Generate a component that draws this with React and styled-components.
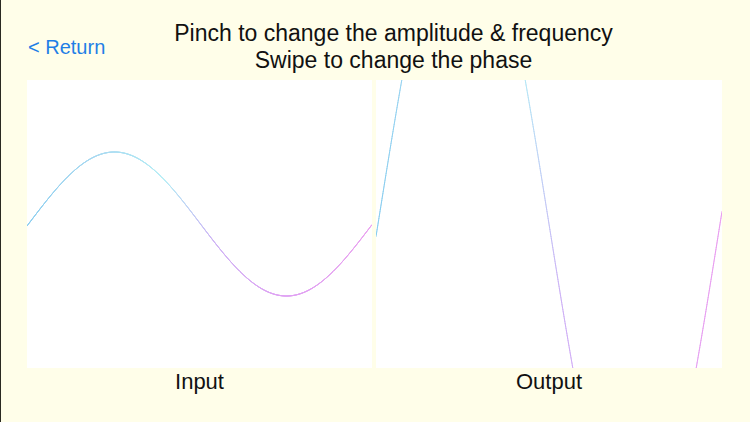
import React from "react";
import styled, { createGlobalStyle } from "styled-components";

const GlobalStyle = createGlobalStyle`
  html, body {
    margin: 0;
    padding: 0;
    background: #fffee9;
  }
  body {
    font-family: "Liberation Sans", Arial, sans-serif;
  }
`;

// colour along the curve, by fraction of arc length
const STOPS = [
  [0, [132, 204, 240]],
  [0.22, [168, 218, 242]],
  [0.38, [176, 238, 246]],
  [0.55, [204, 176, 246]],
  [0.75, [224, 160, 244]],
  [1, [234, 156, 240]],
];

function colorAt(t) {
  for (let i = 1; i < STOPS.length; i++) {
    const [t1, c1] = STOPS[i];
    const [t0, c0] = STOPS[i - 1];
    if (t <= t1) {
      const k = (t - t0) / (t1 - t0);
      const c = c0.map((v, j) => Math.round(v + (c1[j] - v) * k));
      return `rgb(${c[0]},${c[1]},${c[2]})`;
    }
  }
  const c = STOPS[STOPS.length - 1][1];
  return `rgb(${c[0]},${c[1]},${c[2]})`;
}

function buildSegments(width, height, amp, period, shift) {
  const n = 1200;
  const pts = [];
  for (let i = 0; i <= n; i++) {
    const x = (width * i) / n;
    const y = height / 2 - amp * Math.sin((2 * Math.PI * (x - shift)) / period);
    pts.push([x, y]);
  }
  const lens = [0];
  for (let i = 1; i < pts.length; i++) {
    const dx = pts[i][0] - pts[i - 1][0];
    const dy = pts[i][1] - pts[i - 1][1];
    lens.push(lens[i - 1] + Math.hypot(dx, dy));
  }
  const total = lens[lens.length - 1];
  const segs = [];
  for (let i = 1; i < pts.length; i++) {
    segs.push({
      x1: pts[i - 1][0],
      y1: pts[i - 1][1],
      x2: pts[i][0],
      y2: pts[i][1],
      color: colorAt(lens[i] / total),
    });
  }
  return segs;
}

function Wave({ width, height, amp, period, shift }) {
  const segs = buildSegments(width, height, amp, period, shift);
  return (
    <svg width={width} height={height} viewBox={`0 0 ${width} ${height}`}>
      {segs.map((s, i) => (
        <line
          key={i}
          x1={s.x1}
          y1={s.y1}
          x2={s.x2}
          y2={s.y2}
          stroke={s.color}
          strokeWidth="1"
          strokeLinecap="round"
        />
      ))}
    </svg>
  );
}

function App() {
  return (
    <Screen>
      <GlobalStyle />
      <Header>
        <ReturnLink>&lt; Return</ReturnLink>
        <Instructions>
          <div>Pinch to change the amplitude &amp; frequency</div>
          <div>Swipe to change the phase</div>
        </Instructions>
      </Header>
      <Panels>
        <PanelColumn>
          <Plot $width={345}>
            <Wave width={345} height={288} amp={72} period={344} shift={1.5} />
          </Plot>
          <Label>Input</Label>
        </PanelColumn>
        <PanelColumn>
          <Plot $width={346}>
            <Wave width={346} height={288} amp={340} period={342} shift={2} />
          </Plot>
          <Label>Output</Label>
        </PanelColumn>
      </Panels>
    </Screen>
  );
}

export default App;

const Screen = styled.div`
  width: 750px;
  height: 422px;
  box-sizing: border-box;
  border-left: 1px solid #2a2a22;
  background: #fffee9;
  overflow: hidden;
  display: flex;
  flex-direction: column;
`;

const Header = styled.div`
  display: flex;
  align-items: center;
  height: 80px;
  padding: 20px 69px 6px 27px;
  box-sizing: border-box;
`;

const ReturnLink = styled.div`
  width: 78px;
  font-size: 20px;
  color: #1f7fe6;
  white-space: nowrap;
`;

const Instructions = styled.div`
  flex: 1;
  text-align: center;
  font-size: 23px;
  line-height: 27px;
  color: #111;
  white-space: nowrap;
`;

const Panels = styled.div`
  display: flex;
  gap: 4px;
  padding-left: 26px;
`;

const PanelColumn = styled.div`
  display: flex;
  flex-direction: column;
  align-items: center;
`;

const Plot = styled.div`
  width: ${(p) => p.$width}px;
  height: 288px;
  background: #ffffff;
  overflow: hidden;
  line-height: 0;
`;

const Label = styled.div`
  font-size: 22px;
  line-height: 28px;
  color: #111;
`;
